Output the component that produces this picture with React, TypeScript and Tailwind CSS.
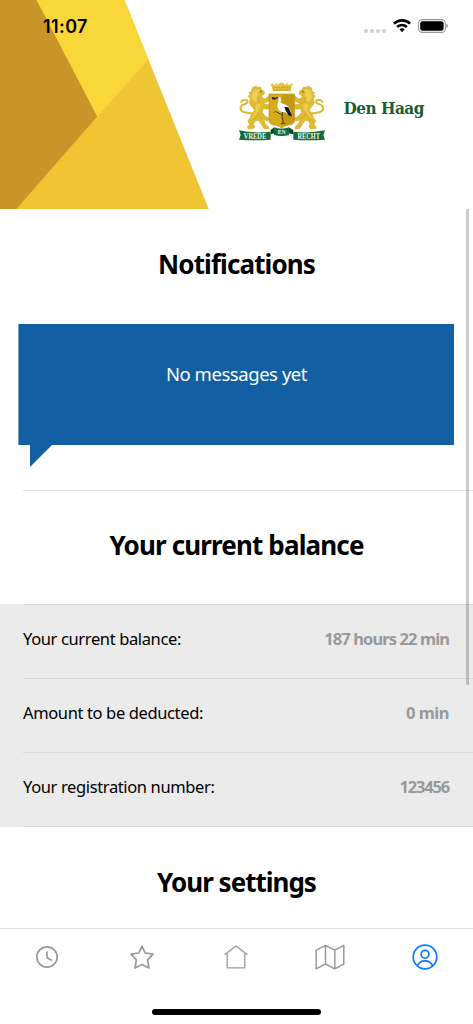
import type { ReactNode } from "react";

const rows = [
  { label: "Your current balance:", value: "187 hours 22 min", valueClass: "tracking-[-0.9px]" },
  { label: "Amount to be deducted:", value: "0 min", valueClass: "tracking-[-0.5px]" },
  { label: "Your registration number:", value: "123456", valueClass: "tracking-[-1.2px]" },
];

function StatusBar() {
  return (
    <div className="absolute inset-x-0 top-0 flex h-[52px] items-center justify-between pl-[43px] pr-[25px]">
      <span className="font-['Inter',sans-serif] text-[18px] font-semibold tracking-[0.4px] text-black">11:07</span>
      <div className="flex items-center">
        <div className="mt-[9px] mr-[7px] flex gap-[2px]">
          {[0, 1, 2, 3].map((i) => (
            <span key={i} className="size-[4px] rounded-full bg-[#cfcfcf]" />
          ))}
        </div>
        <svg width="18" height="14" viewBox="0 0 18 14" className="mr-[7px]">
          <path d="M9 0C5.5 0 2.3 1.4 0 3.7l1.8 1.9a10.3 10.3 0 0 1 14.4 0L18 3.7A12.8 12.8 0 0 0 9 0Z" />
          <path d="M9 4.8c-2.2 0-4.2.9-5.7 2.3l1.8 1.8a5.6 5.6 0 0 1 7.8 0l1.8-1.8A8.2 8.2 0 0 0 9 4.8Z" />
          <path d="M9 9.3c-1 0-1.9.4-2.6 1L9 13.3l2.6-3c-.7-.6-1.6-1-2.6-1Z" />
        </svg>
        <svg width="30" height="14" viewBox="0 0 30 14">
          <rect x="0.6" y="0.6" width="26.8" height="12.8" rx="3.8" fill="none" stroke="#999" strokeWidth="1.1" />
          <rect x="2.2" y="2.2" width="23.4" height="9.6" rx="2.3" />
          <path d="M28.4 4.8c1 .4 1.5 1.2 1.5 2.2s-.5 1.8-1.5 2.2Z" fill="#999" />
        </svg>
      </div>
    </div>
  );
}

function Lion() {
  return (
    <g>
      <path
        d="M84 133C72 126 60 131 51 124C42 116 48 104 60 102C70 99 70 92 62 90C56 88 51 92 48 96"
        fill="none"
        stroke="#dcb831"
        strokeWidth="6"
        strokeLinecap="round"
      />
      <path
        d="M82 54L91 49L98 52L106 52L109 58L117 64L118 72L111 76L109 83L121 87L130 79L135 82L131 92L121 98L116 103L133 105L135 113L128 117L114 116L111 127L120 138L132 145L128 153L116 149L119 160L130 170L131 176L117 175L108 161L100 150L90 153L85 162L89 171L84 176H69L68 170L74 164L69 152L77 142L80 130L89 121L85 114L78 107L73 97L77 86L70 78L77 75L72 68L79 66Z"
        fill="#dfba33"
        stroke="#dfba33"
        strokeWidth="3"
        strokeLinejoin="round"
      />
      <path d="M85 62L96 57L105 61L98 68L103 75L94 82L98 92L90 97L83 87L79 78Z" fill="#edcf57" />
      <path d="M91 105L101 98L107 106L105 122L95 132L88 143L78 150L84 137L93 124Z" fill="#ecca4c" />
      <path d="M105 60L112 66L106 69Z" fill="#8d7425" />
      <path d="M103 81L98 90L105 99M105 120L98 133L112 148M94 139L79 151" stroke="#c49d27" strokeWidth="2" fill="none" />
    </g>
  );
}

function Emblem() {
  return (
    <svg width="115" height="80" viewBox="0 0 345 240">
      <Lion />
      <g transform="matrix(-1 0 0 1 341 0)">
        <Lion />
      </g>

      {/* crown */}
      <path d="M140 48L137 43L142 40L148 47L153 39L158 46L164 40L170 37L176 40L182 46L187 39L192 47L198 40L203 43L199 50L197 63H144Z" fill="#e2bd39" />
      <path d="M144 52H197M145 60H196" stroke="#b18a20" strokeWidth="2" strokeDasharray="5 3" />
      <g fill="#f0d36b">
        <circle cx="139" cy="44" r="3" />
        <circle cx="155" cy="42" r="3" />
        <circle cx="170" cy="40" r="3" />
        <circle cx="186" cy="42" r="3" />
        <circle cx="201" cy="44" r="3" />
      </g>

      {/* shield with stork */}
      <path d="M132 72H209V151C209 161 201 164 188 166Q177 168 170 175Q164 168 152 166C139 164 132 161 132 151Z" fill="#d6ad19" />
      <path d="M134 74H207V150C207 158 200 161 187 163Q177 165 170 171V74Z" fill="#c59a10" />
      <path d="M132 72H209V151C209 161 201 164 188 166Q177 168 170 175Q164 168 152 166C139 164 132 161 132 151Z" fill="none" stroke="#b38b19" strokeWidth="2" />
      <path d="M157 83C163 78 169 82 168 89L166 98C172 101 184 102 191 111L199 129L196 137L181 127C168 128 157 120 157 108C157 99 162 95 162 88Z" fill="#fff" />
      <path d="M178 110L190 112L198 129L201 139L192 137L182 122Z" fill="#16191b" />
      <path d="M160 84L148 89L140 87L142 83L138 81L146 82L152 83L158 80Z" fill="#24221e" />
      <path d="M173 126L171 140L175 159M172 135L151 124L147 128M175 159L167 162M175 159L181 161" stroke="#302b20" strokeWidth="2.5" fill="none" />

      {/* motto ribbon */}
      <path d="M137 180L148 172V190L137 193ZM205 180L190 172V190L205 193Z" fill="#0b4929" />
      <path d="M42 181Q90 191 137 185V209Q90 213 42 209L47 195Z" fill="#176b3c" />
      <path d="M300 181Q252 191 205 185V209Q252 213 300 209L295 195Z" fill="#176b3c" />
      <path d="M147 172Q170 180 192 172V195Q170 201 147 195Z" fill="#176b3c" />
      <g fill="#edf5ee" fontFamily="Liberation Serif, serif" fontWeight="bold" textAnchor="middle">
        <text x="90" y="206" fontSize="22" textLength="67" lengthAdjust="spacingAndGlyphs">VREDE</text>
        <text x="170" y="193" fontSize="18" textLength="24" lengthAdjust="spacingAndGlyphs">EN</text>
        <text x="251" y="206" fontSize="22" textLength="67" lengthAdjust="spacingAndGlyphs">RECHT</text>
      </g>
    </svg>
  );
}

function Header() {
  return (
    <header className="relative flex h-[209px] shrink-0">
      <svg width="209" height="209" viewBox="0 0 209 209" className="shrink-0">
        <path d="M30 0H124.5L208.7 209H10Z" fill="#efc534" />
        <path d="M36 0H124.5L148.3 59.5L97 117Z" fill="#f9d739" />
        <path d="M0 0H36.5L97.2 116.5L16.3 209H0Z" fill="#c99428" />
      </svg>
      <div className="flex pt-[70px] pl-[15.5px]">
        <Emblem />
        <span className="mt-[25px] ml-[4px] font-['DejaVu_Serif_Condensed','DejaVu_Serif',serif] text-[17px] leading-[26px] font-bold tracking-[-0.5px] whitespace-nowrap text-[#1b5c31]">
          Den Haag
        </span>
      </div>
      <StatusBar />
    </header>
  );
}

function Heading({ children, className }: { children: ReactNode; className: string }) {
  return <h2 className={`text-center text-[26px] leading-[36px] font-bold text-black ${className}`}>{children}</h2>;
}

function TabBar() {
  return (
    <nav className="h-[96px] shrink-0 border-t border-[#dedede] bg-white">
      <div className="grid h-[56px] w-[472px] grid-cols-5 place-items-center text-[#999]">
        <svg width="24" height="24" viewBox="0 0 24 24" fill="none" stroke="currentColor" strokeWidth="1.7">
          <circle cx="12" cy="12" r="10.2" />
          <path d="M12 6.5V12.7L16.8 15.5" />
        </svg>
        <svg width="26" height="26" viewBox="0 0 26 26" fill="none" stroke="currentColor" strokeWidth="1.7" strokeLinejoin="round">
          <path d="M13 2.2L16.2 9L24 10.2L18.6 15.8L20 24L13 20.5L6 24L7.4 15.8L2 10.2L9.8 9Z" />
        </svg>
        <svg width="26" height="26" viewBox="0 0 26 26" fill="none" stroke="currentColor" strokeWidth="1.3" strokeLinejoin="round">
          <path d="M1.5 10.8L13 2L24.5 10.8M4.2 9V23.1Q4.2 23.8 4.9 23.8H21.1Q21.8 23.8 21.8 23.1V9" />
        </svg>
        <svg width="30" height="26" viewBox="0 0 30 26" fill="none" stroke="currentColor" strokeWidth="1.5" strokeLinejoin="round">
          <path d="M1.2 6.2L10.5 1.3L19.8 6.2L28.8 1.3V20L19.8 24.8L10.5 20L1.2 24.8ZM10.5 1.3V20M19.8 6.2V24.8" />
        </svg>
        <svg width="26" height="26" viewBox="0 0 26 26" fill="none" stroke="#0a7cff" strokeWidth="1.7">
          <circle cx="13" cy="13" r="11.8" />
          <circle cx="13" cy="10.2" r="3.9" />
          <path d="M5.4 22C6.6 18.5 9.5 16.8 13 16.8S19.4 18.5 20.6 22" />
        </svg>
      </div>
      <div className="mx-auto mt-[24px] h-[6px] w-[169px] rounded-full bg-black" />
    </nav>
  );
}

export default function App() {
  return (
    <div className="relative flex h-[1024px] w-[473px] flex-col overflow-hidden bg-white font-['Noto_Sans',sans-serif]">
      <Header />
      <main className="min-h-0 flex-1 overflow-hidden">
        <section className="h-[281px] pt-[37px]">
          <Heading className="tracking-[-0.9px]">Notifications</Heading>
          <div className="relative mr-[19px] ml-[18px] mt-[42px] h-[121px] border-l border-[#73a0c9] bg-[#135fa3] pt-[36px] text-center text-[18.5px] leading-[28px] tracking-[-0.45px] text-white">
            No messages yet
            <svg width="22" height="22" viewBox="0 0 22 22" className="absolute top-full left-[11px]">
              <path d="M0 0H22L0 22Z" fill="#135fa3" />
            </svg>
          </div>
        </section>

        <section>
          <div className="ml-[23px] h-[114px] border-t border-[#e3e3e3] pt-[36px] pr-[23px]">
            <Heading className="tracking-[-0.85px]">Your current balance</Heading>
          </div>
          <div className="h-[223px] bg-[#ebebeb] pl-[23px]">
            {rows.map((row) => (
              <div key={row.label} className="flex h-[74px] justify-between border-t border-[#d7d7d8] pt-[21px] pr-[24px] text-[16.5px] leading-[26px]">
                <span className="tracking-[-0.37px] text-black">{row.label}</span>
                <span className={`font-bold text-[#999] ${row.valueClass}`}>{row.value}</span>
              </div>
            ))}
            <div className="border-t border-[#d9d9d9]" />
          </div>
          <div className="pt-[37px]">
            <Heading className="tracking-[-1px]">Your settings</Heading>
          </div>
        </section>
      </main>
      <TabBar />
      <div className="absolute top-[209px] right-[4px] h-[476px] w-[3px] rounded-b-full bg-black/20" />
    </div>
  );
}
